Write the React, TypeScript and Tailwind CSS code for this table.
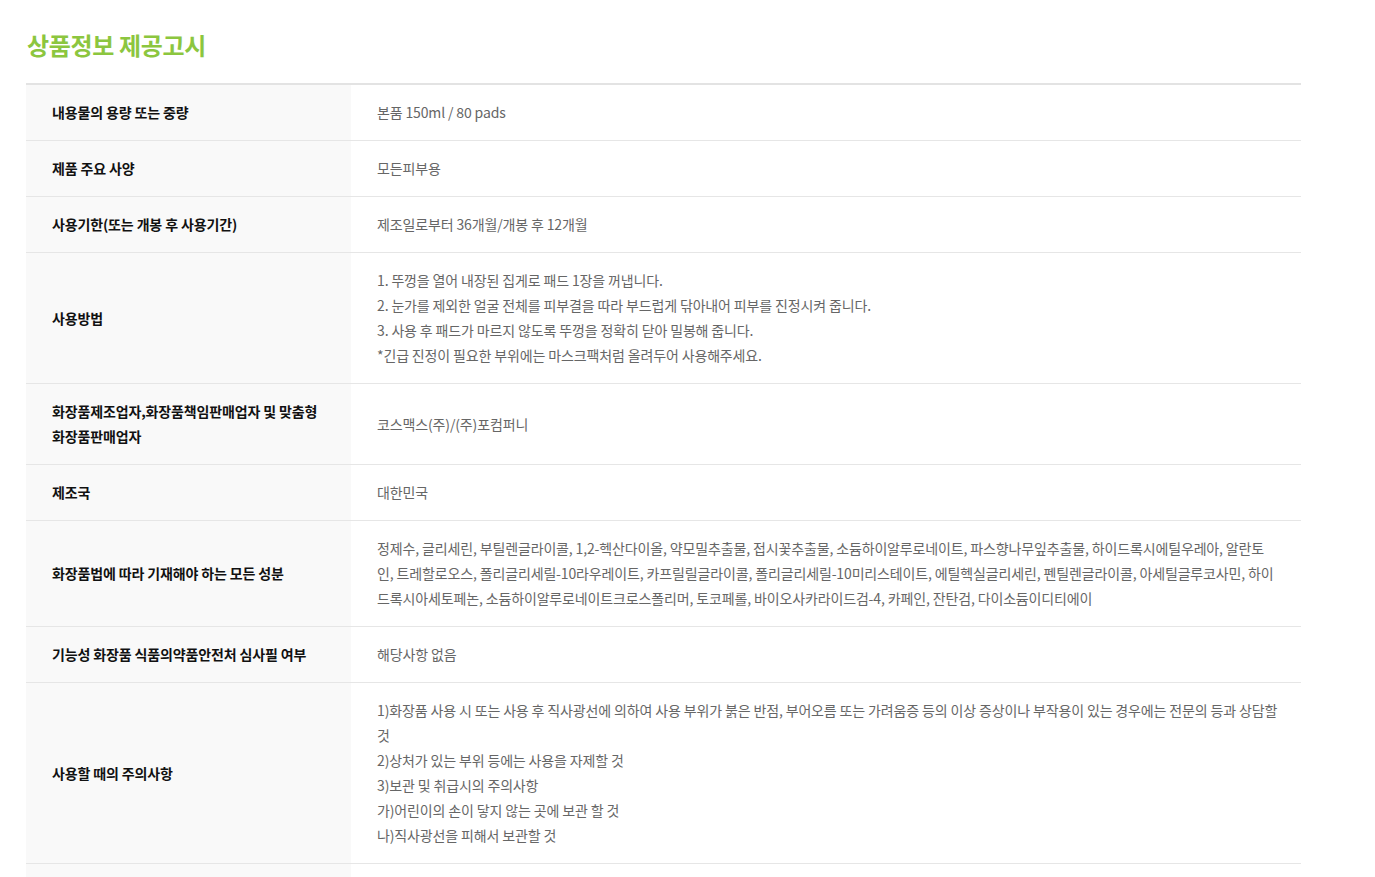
const rows: { label: string[]; lines: string[] }[] = [
  { label: ["내용물의 용량 또는 중량"], lines: ["본품 150ml / 80 pads"] },
  { label: ["제품 주요 사양"], lines: ["모든피부용"] },
  { label: ["사용기한(또는 개봉 후 사용기간)"], lines: ["제조일로부터 36개월/개봉 후 12개월"] },
  {
    label: ["사용방법"],
    lines: [
      "1. 뚜껑을 열어 내장된 집게로 패드 1장을 꺼냅니다.",
      "2. 눈가를 제외한 얼굴 전체를 피부결을 따라 부드럽게 닦아내어 피부를 진정시켜 줍니다.",
      "3. 사용 후 패드가 마르지 않도록 뚜껑을 정확히 닫아 밀봉해 줍니다.",
      "*긴급 진정이 필요한 부위에는 마스크팩처럼 올려두어 사용해주세요.",
    ],
  },
  {
    label: ["화장품제조업자,화장품책임판매업자 및 맞춤형", "화장품판매업자"],
    lines: ["코스맥스(주)/(주)포컴퍼니"],
  },
  { label: ["제조국"], lines: ["대한민국"] },
  {
    label: ["화장품법에 따라 기재해야 하는 모든 성분"],
    lines: [
      "정제수, 글리세린, 부틸렌글라이콜, 1,2-헥산다이올, 약모밀추출물, 접시꽃추출물, 소듐하이알루로네이트, 파스향나무잎추출물, 하이드록시에틸우레아, 알란토",
      "인, 트레할로오스, 폴리글리세릴-10라우레이트, 카프릴릴글라이콜, 폴리글리세릴-10미리스테이트, 에틸헥실글리세린, 펜틸렌글라이콜, 아세틸글루코사민, 하이",
      "드록시아세토페논, 소듐하이알루로네이트크로스폴리머, 토코페롤, 바이오사카라이드검-4, 카페인, 잔탄검, 다이소듐이디티에이",
    ],
  },
  { label: ["기능성 화장품 식품의약품안전처 심사필 여부"], lines: ["해당사항 없음"] },
  {
    label: ["사용할 때의 주의사항"],
    lines: [
      "1)화장품 사용 시 또는 사용 후 직사광선에 의하여 사용 부위가 붉은 반점, 부어오름 또는 가려움증 등의 이상 증상이나 부작용이 있는 경우에는 전문의 등과 상담할",
      "것",
      "2)상처가 있는 부위 등에는 사용을 자제할 것",
      "3)보관 및 취급시의 주의사항",
      "가)어린이의 손이 닿지 않는 곳에 보관 할 것",
      "나)직사광선을 피해서 보관할 것",
    ],
  },
  { label: ["품질보증기준"], lines: ["본 제품에 이상이 있을 경우 공정거래위원회 고시 소비자분쟁해결기준에 의해 보상해 드립니다."] },
];

export default function App() {
  return (
    <div className="min-h-screen bg-white pl-[26px] pt-[28px] font-['Noto_Sans_CJK_KR','Noto_Sans',sans-serif]">
      <h2 className="text-[24px] font-bold leading-[34px] tracking-[-0.015em] text-[#8cc63f] pl-px">
        상품정보 제공고시
      </h2>
      <div className="mt-[21px] w-[1275px] border-t-2 border-[#e3e3e3]">
        {rows.map((r, i) => (
          <div key={i} className="flex border-b border-[#e6e6e6]">
            <div className="flex w-[325px] shrink-0 flex-col justify-center bg-[#f9f9f9] px-[26px] py-[15px] text-[14px] font-bold leading-[25px] tracking-[-0.01em] text-[#111]">
              {r.label.map((l, j) => (
                <div key={j}>{l}</div>
              ))}
            </div>
            <div className="flex flex-1 flex-col justify-center px-[26px] py-[15px] text-[14px] leading-[25px] tracking-[-0.01em] text-[#666]">
              {r.lines.map((l, j) => (
                <div key={j} className="whitespace-nowrap">
                  {l}
                </div>
              ))}
            </div>
          </div>
        ))}
      </div>
    </div>
  );
}
